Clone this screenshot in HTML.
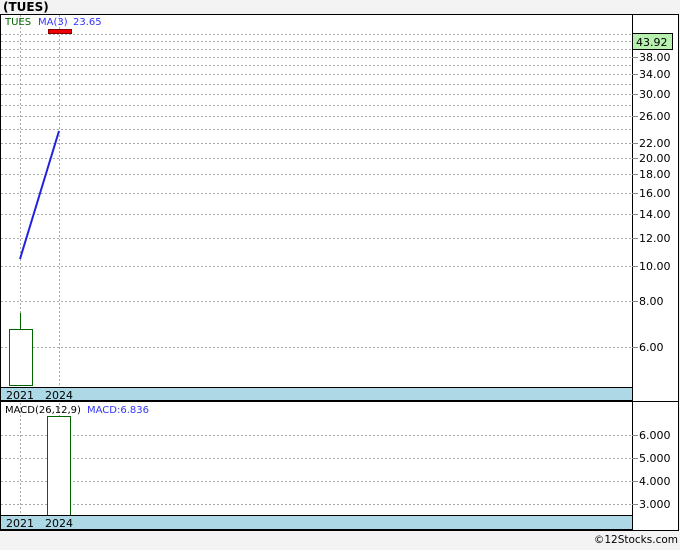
<!DOCTYPE html>
<html><head><style>
body{margin:0;background:#f3f3f3;width:680px;height:546px;overflow:hidden;font-family:"DejaVu Sans","Liberation Sans",sans-serif}
</style></head><body>
<svg width="680" height="546" xmlns="http://www.w3.org/2000/svg" font-family="DejaVu Sans, Liberation Sans, sans-serif">
<text x="3" y="11" font-size="12" font-weight="bold" fill="#000">(TUES)</text>
<rect x="0.5" y="14.5" width="678" height="516" fill="#fff" stroke="#000"/>
<g stroke="#aaa" stroke-dasharray="2,2" stroke-width="1">
<line x1="1" x2="632" y1="34.5" y2="34.5"/><line x1="1" x2="632" y1="41.5" y2="41.5"/>
<line x1="1" x2="632" y1="49.5" y2="49.5"/><line x1="1" x2="632" y1="57.5" y2="57.5"/>
<line x1="1" x2="632" y1="65.5" y2="65.5"/><line x1="1" x2="632" y1="74.5" y2="74.5"/>
<line x1="1" x2="632" y1="84.5" y2="84.5"/><line x1="1" x2="632" y1="94.5" y2="94.5"/>
<line x1="1" x2="632" y1="105.5" y2="105.5"/><line x1="1" x2="632" y1="116.5" y2="116.5"/>
<line x1="1" x2="632" y1="129.5" y2="129.5"/><line x1="1" x2="632" y1="143.5" y2="143.5"/>
<line x1="1" x2="632" y1="158.5" y2="158.5"/><line x1="1" x2="632" y1="174.5" y2="174.5"/>
<line x1="1" x2="632" y1="193.5" y2="193.5"/><line x1="1" x2="632" y1="214.5" y2="214.5"/>
<line x1="1" x2="632" y1="238.5" y2="238.5"/><line x1="1" x2="632" y1="266.5" y2="266.5"/>
<line x1="1" x2="632" y1="301.5" y2="301.5"/><line x1="1" x2="632" y1="347.5" y2="347.5"/>
<line x1="20.5" x2="20.5" y1="15" y2="530"/><line x1="59.5" x2="59.5" y1="15" y2="530"/>
<line x1="1" x2="632" y1="435.5" y2="435.5"/><line x1="1" x2="632" y1="458.5" y2="458.5"/>
<line x1="1" x2="632" y1="481.5" y2="481.5"/><line x1="1" x2="632" y1="504.5" y2="504.5"/>
</g>
<line x1="632.5" x2="632.5" y1="15" y2="530" stroke="#000"/>
<g stroke="#888">
<line x1="632" x2="638" y1="57.5" y2="57.5"/><line x1="632" x2="638" y1="74.5" y2="74.5"/><line x1="632" x2="638" y1="94.5" y2="94.5"/><line x1="632" x2="638" y1="116.5" y2="116.5"/><line x1="632" x2="638" y1="143.5" y2="143.5"/><line x1="632" x2="638" y1="158.5" y2="158.5"/><line x1="632" x2="638" y1="174.5" y2="174.5"/><line x1="632" x2="638" y1="193.5" y2="193.5"/><line x1="632" x2="638" y1="214.5" y2="214.5"/><line x1="632" x2="638" y1="238.5" y2="238.5"/><line x1="632" x2="638" y1="266.5" y2="266.5"/><line x1="632" x2="638" y1="301.5" y2="301.5"/><line x1="632" x2="638" y1="347.5" y2="347.5"/>
<line x1="632" x2="638" y1="435.5" y2="435.5"/><line x1="632" x2="638" y1="458.5" y2="458.5"/><line x1="632" x2="638" y1="481.5" y2="481.5"/><line x1="632" x2="638" y1="504.5" y2="504.5"/>
</g>
<g font-size="11" fill="#000">
<text x="639" y="61">38.00</text><text x="639" y="78">34.00</text><text x="639" y="98">30.00</text><text x="639" y="120">26.00</text><text x="639" y="147">22.00</text><text x="639" y="162">20.00</text><text x="639" y="178">18.00</text><text x="639" y="197">16.00</text><text x="639" y="218">14.00</text><text x="639" y="242">12.00</text><text x="639" y="270">10.00</text><text x="639" y="305">8.00</text><text x="639" y="351">6.00</text>
<text x="639" y="439">6.000</text><text x="639" y="462">5.000</text><text x="639" y="485">4.000</text><text x="639" y="508">3.000</text>
</g>
<rect x="632.5" y="33.5" width="40" height="16" fill="#b8f0b0" stroke="#000"/>
<text x="636" y="46" font-size="11">43.92</text>
<text x="5" y="25" font-size="10" fill="#006400">TUES</text>
<text x="38" y="25" font-size="10" fill="#3333ff">MA(3)</text>
<text x="73" y="25" font-size="10" fill="#3333ff">23.65</text>
<rect x="48.5" y="29.5" width="23" height="4" fill="#e00" stroke="#800"/>
<line x1="20" y1="259" x2="59" y2="131" stroke="#2222dd" stroke-width="2"/>
<line x1="20.5" x2="20.5" y1="313" y2="329" stroke="#006400"/>
<rect x="9.5" y="329.5" width="23" height="56" fill="#fff" stroke="#006400"/>
<rect x="0.5" y="387.5" width="632" height="13" fill="#add8e6" stroke="#000"/>
<text x="6" y="399" font-size="11">2021</text><text x="45" y="399" font-size="11">2024</text>
<line x1="0" x2="679" y1="401.5" y2="401.5" stroke="#000"/>
<text x="5" y="413" font-size="10" fill="#000">MACD(26,12,9)</text>
<text x="87" y="413" font-size="10" fill="#3333ff">MACD:6.836</text>
<rect x="47.5" y="416.5" width="23" height="99" fill="#fff" stroke="#006400"/>
<rect x="0.5" y="515.5" width="632" height="14" fill="#add8e6" stroke="#000"/>
<text x="6" y="527" font-size="11">2021</text><text x="45" y="527" font-size="11">2024</text>
<text x="678" y="543" font-size="10.5" fill="#000" text-anchor="end">©12Stocks.com</text>
</svg>
</body></html>
